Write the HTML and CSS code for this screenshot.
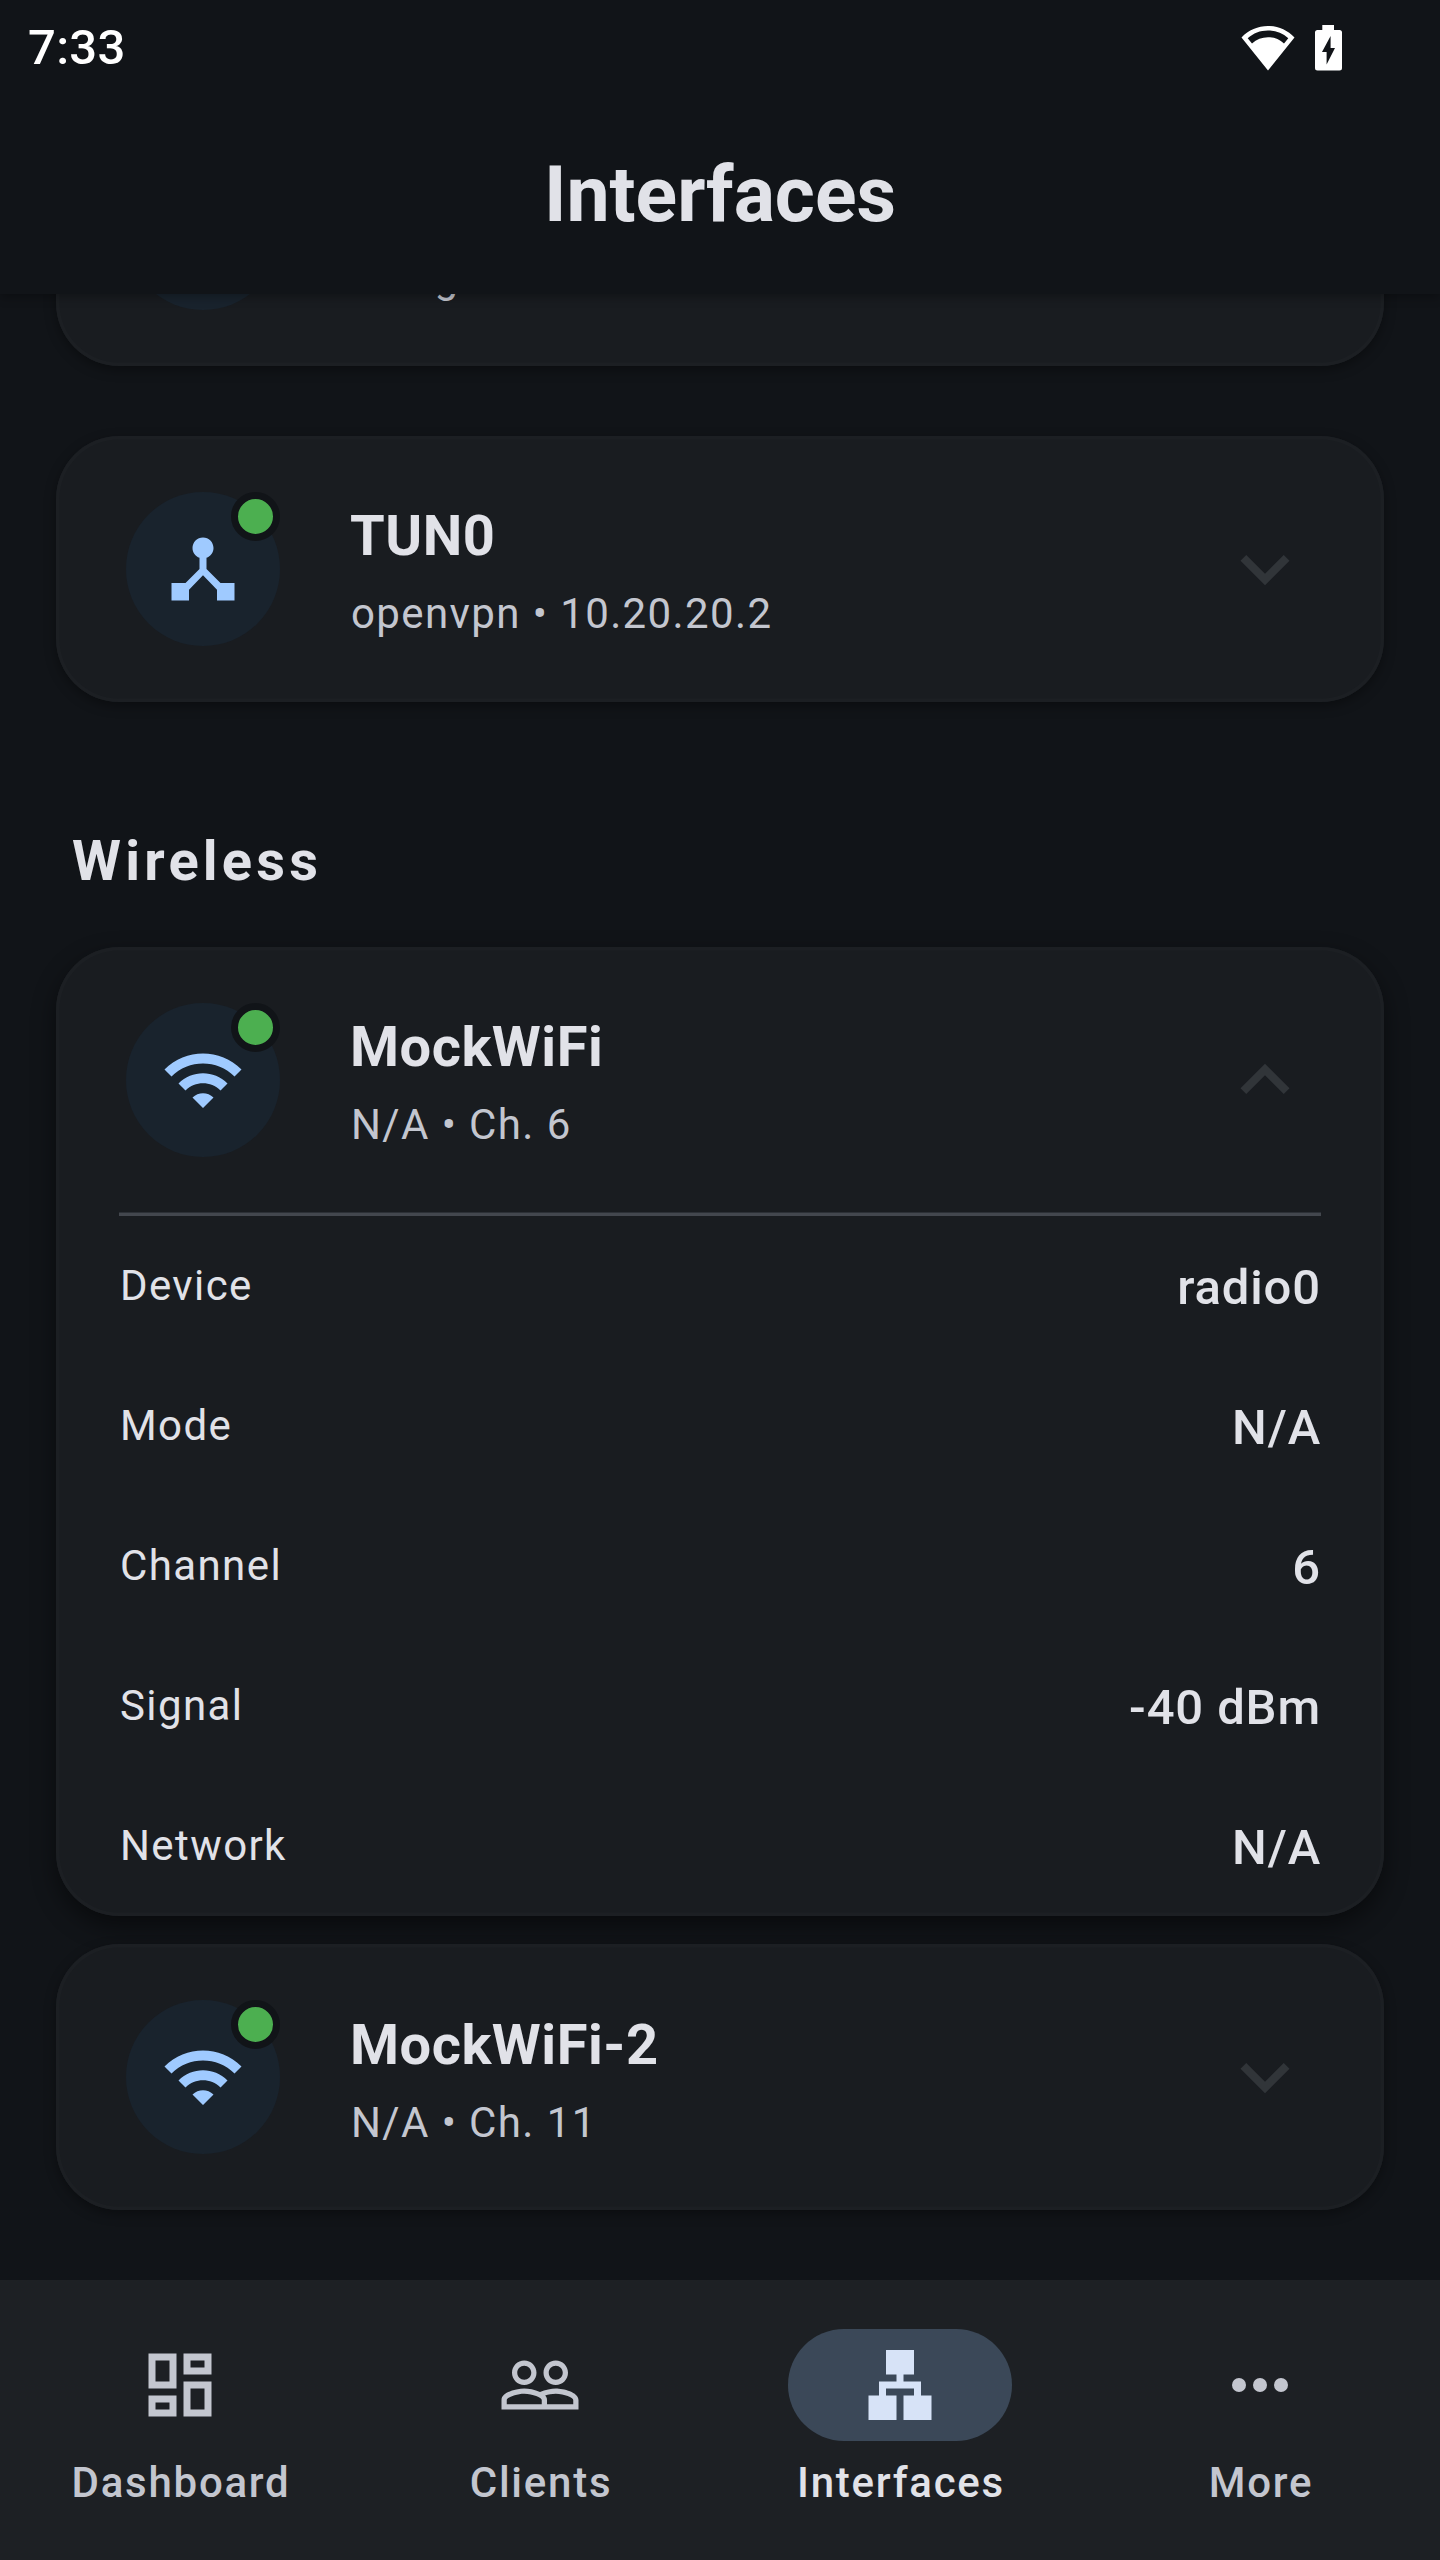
FILE: index.html
```html
<!DOCTYPE html>
<html lang="en">
<head>
<meta charset="utf-8">
<title>Interfaces</title>
<link rel="stylesheet" href="styles.css">
</head>
<body>
<svg class="sprite" aria-hidden="true">
  <symbol id="hub" viewBox="0 0 24 24"><path d="M17 16l-4-4V8.82C14.16 8.4 15 7.3 15 6c0-1.66-1.34-3-3-3S9 4.34 9 6c0 1.3.84 2.4 2 2.82V12l-4 4H3v5h5v-3.05l4-4.2 4 4.2V21h5v-5h-4z"/></symbol>
  <symbol id="wifi" viewBox="0 0 24 24"><path d="M1 9l2 2c4.97-4.97 13.03-4.97 18 0l2-2C16.93 2.93 7.08 2.93 1 9zm8 8l3 3 3-3c-1.65-1.66-4.34-1.66-6 0zm-4-4l2 2c2.76-2.76 7.24-2.76 10 0l2-2C15.14 9.14 8.87 9.14 5 13z"/></symbol>
  <symbol id="down" viewBox="0 0 24 24"><path d="M16.59 8.59L12 13.17 7.41 8.59 6 10l6 6 6-6z"/></symbol>
  <symbol id="up" viewBox="0 0 24 24"><path d="M16.59 15.41L12 10.83l-4.59 4.58L6 14l6-6 6 6z"/></symbol>
</svg>
<div class="screen">
  <header class="top">
    <div class="status">
      <span class="time">7:33</span>
      <div class="status-icons">
        <svg class="st-wifi" viewBox="0 0 54 46"><path fill-rule="evenodd" d="M27 1C17 1 7.500 5 .5 12.500L27 45.500 53.500 12.500C46.500 5 37 1 27 1zM27 5.500C35 5.500 41.500 8.200 47.300 13.200L43 18.500C38.500 14.300 33 12.200 27 12.200S15.500 14.300 11 18.500L6.700 13.200C12.500 8.200 19 5.500 27 5.500z"/></svg>
        <svg class="st-bat" viewBox="0 0 27 46"><path fill-rule="evenodd" d="M7.300 0H19V5H24.500Q27 5 27 7.500V43Q27 45.500 24.500 45.500H2.500Q0 45.500 0 43V7.500Q0 5 2.500 5H7.300zM15.600 11L7 27H11.600V39.500L20 23H15.600z"/></svg>
      </div>
    </div>
    <h1 class="title">Interfaces</h1>
  </header>

  <main class="list">
    <section class="card clipped">
      <div class="head">
        <div class="avatar"><svg class="icon"><use href="#hub"/></svg><span class="dot"></span></div>
        <div class="info"><div class="name">&nbsp;</div><div class="sub">wireguard</div></div>
        <svg class="chev"><use href="#down"/></svg>
      </div>
    </section>
    <section class="card spaced">
      <div class="head">
        <div class="avatar"><svg class="icon"><use href="#hub"/></svg><span class="dot"></span></div>
        <div class="info"><div class="name">TUN0</div><div class="sub">openvpn • 10.20.20.2</div></div>
        <svg class="chev"><use href="#down"/></svg>
      </div>
    </section>

    <h2 class="section">Wireless</h2>

    <section class="card open">
      <div class="head">
        <div class="avatar"><svg class="icon"><use href="#wifi"/></svg><span class="dot"></span></div>
        <div class="info"><div class="name">MockWiFi</div><div class="sub">N/A • Ch. 6</div></div>
        <svg class="chev"><use href="#up"/></svg>
      </div>
      <dl class="details">
        <div class="row"><dt>Device</dt><dd>radio0</dd></div>
        <div class="row"><dt>Mode</dt><dd>N/A</dd></div>
        <div class="row"><dt>Channel</dt><dd>6</dd></div>
        <div class="row"><dt>Signal</dt><dd>-40 dBm</dd></div>
        <div class="row"><dt>Network</dt><dd>N/A</dd></div>
      </dl>
    </section>
    <section class="card">
      <div class="head">
        <div class="avatar"><svg class="icon"><use href="#wifi"/></svg><span class="dot"></span></div>
        <div class="info"><div class="name">MockWiFi-2</div><div class="sub">N/A • Ch. 11</div></div>
        <svg class="chev"><use href="#down"/></svg>
      </div>
    </section>
  </main>

  <nav class="nav">
    <a class="tab"><span class="pill"><svg class="icon" viewBox="0 0 24 24"><path d="M19 5v2h-4V5h4M9 5v6H5V5h4m10 8v6h-4v-6h4M9 17v2H5v-2h4M21 3h-8v6h8V3zM11 3H3v10h8V3zm10 8h-8v10h8V11zm-10 4H3v6h8v-6z"/></svg></span><span class="label">Dashboard</span></a>
    <a class="tab"><span class="pill"><svg class="icon" viewBox="0 0 24 24"><path d="M16.500 13c-1.200 0-3.070.34-4.500 1-1.430-.67-3.300-1-4.500-1C5.330 13 1 14.080 1 16.250V19h22v-2.750c0-2.170-4.330-3.250-6.500-3.250zm-4 4.500h-10v-1.250c0-.54 2.560-1.750 5-1.750s5 1.210 5 1.750v1.250zm9 0H14v-1.250c0-.46-.2-.86-.52-1.220.88-.3 1.960-.53 3.020-.53 2.440 0 5 1.210 5 1.750v1.250zM7.500 12c1.930 0 3.500-1.570 3.500-3.500S9.430 5 7.500 5 4 6.570 4 8.500 5.570 12 7.500 12zm0-5.500c1.100 0 2 .9 2 2s-.9 2-2 2-2-.9-2-2 .9-2 2-2zm9 5.500c1.930 0 3.500-1.570 3.500-3.500S18.430 5 16.500 5 13 6.570 13 8.500s1.570 3.500 3.500 3.500zm0-5.500c1.100 0 2 .9 2 2s-.9 2-2 2-2-.9-2-2 .9-2 2-2z"/></svg></span><span class="label">Clients</span></a>
    <a class="tab active"><span class="pill"><svg class="icon" viewBox="0 0 24 24"><path d="M13 22h8v-7h-3v-4h-5V9h3V2H8v7h3v2H6v4H3v7h8v-7H8v-2h8v2h-3v7z"/></svg></span><span class="label">Interfaces</span></a>
    <a class="tab"><span class="pill"><svg class="icon" viewBox="0 0 24 24"><circle cx="6" cy="12" r="2"/><circle cx="12" cy="12" r="2"/><circle cx="18" cy="12" r="2"/></svg></span><span class="label">More</span></a>
  </nav>
</div>
</body>
</html>
```
FILE: styles.css
```css
* { box-sizing: border-box; margin: 0; padding: 0; }

body {
  background: #111418;
  color: #e1e2e8;
  font-family: Roboto, "Liberation Sans", sans-serif;
}

svg { fill: currentColor; flex: none; display: block; }
.sprite { position: absolute; width: 0; height: 0; }

.screen {
  width: 1440px;
  height: 2560px;
  display: flex;
  flex-direction: column;
  overflow: hidden;
}

/* Status bar and app bar */
.top {
  position: relative;
  z-index: 1;
  flex: none;
  height: 294px;
  background: #111418;
  box-shadow: 0 3px 10px rgba(0, 0, 0, .3);
}
.status {
  height: 96px;
  padding: 0 98px 0 28px;
  display: flex;
  justify-content: space-between;
  align-items: center;
  color: #fff;
}
.time { font-size: 49px; font-weight: 500; line-height: 58px; letter-spacing: .3px; }
.status-icons { display: flex; gap: 20px; }
.st-wifi { width: 54px; height: 46px; }
.st-bat { width: 27px; height: 46px; }
.title {
  height: 198px;
  line-height: 198px;
  font-size: 77px;
  font-weight: 700;
  text-align: center;
}

/* Interface list */
.list { flex: 1; min-height: 0; padding: 0 56px; }
.card {
  background: #191c20;
  border-radius: 63px;
  box-shadow: inset 0 0 0 3.5px #1c1f23, 0 4px 12px rgba(0, 0, 0, .35);
}
.clipped { margin-top: -194.500px; }
.spaced { margin-top: 70px; }
.open {
  margin-bottom: 28px;
  box-shadow: inset 0 0 0 3.5px #1c1f23, 0 10px 24px rgba(0, 0, 0, .48);
}
.head {
  height: 266px;
  padding: 0 70px;
  display: flex;
  align-items: center;
}
.avatar {
  position: relative;
  width: 154px;
  height: 154px;
  border-radius: 50%;
  background: #19232d;
  color: #9fcaff;
  display: flex;
  align-items: center;
  justify-content: center;
}
.icon { width: 84px; height: 84px; }
.dot {
  position: absolute;
  top: 0;
  right: 0;
  width: 49px;
  height: 49px;
  border: 7px solid #111418;
  border-radius: 50%;
  background: #4caf50;
}
.info { flex: 1; padding-left: 70px; }
.name { font-size: 56px; font-weight: 700; line-height: 82px; letter-spacing: .525px; }
.sub {
  font-size: 42px;
  line-height: 56px;
  margin-top: 9px;
  padding-left: 1px;
  letter-spacing: 1.4px;
  color: #c3c6cf;
}
.chev { width: 98px; height: 98px; color: #313539; }

.section {
  margin: 117px 0 0 16px;
  height: 128px;
  font-size: 56px;
  font-weight: 700;
  line-height: 84px;
  letter-spacing: 4.2px;
}

/* The divider is painted across the top of the detail list */
.details {
  margin: -1px 63px 0;
  padding-top: 4.5px;
  background: linear-gradient(#2c3036 0 1px, #43474e 1px 4px, transparent 4px);
}
.row {
  height: 140px;
  display: flex;
  justify-content: space-between;
  align-items: center;
}
.row dt { font-size: 42px; letter-spacing: 1.4px; padding: 0 0 2px 1px; }
.row dd { font-size: 49px; font-weight: 500; letter-spacing: .875px; padding-top: 3px; }

/* Bottom navigation */
.nav {
  flex: none;
  height: 280px;
  padding-top: 49px;
  background: #1d2024;
  display: grid;
  grid-template-columns: repeat(4, 1fr);
  color: #c3c6cf;
}
.tab { display: flex; flex-direction: column; align-items: center; gap: 14px; }
.pill {
  width: 224px;
  height: 112px;
  border-radius: 56px;
  display: flex;
  align-items: center;
  justify-content: center;
}
.label { font-size: 42px; font-weight: 500; line-height: 56px; letter-spacing: 1.75px; padding-left: 2px; }
.active { color: #e1e2e8; }
.active .pill { background: #3b4858; color: #d7e3f7; }
```
